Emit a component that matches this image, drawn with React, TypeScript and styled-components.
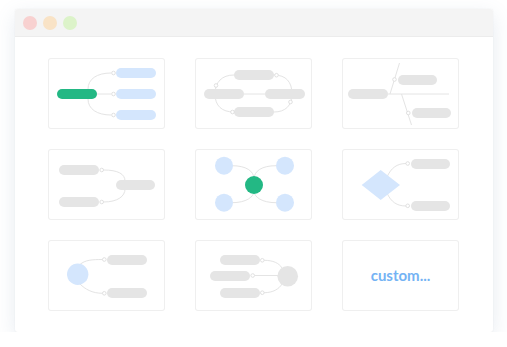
import React from "react";
import styled, { createGlobalStyle } from "styled-components";

const Global = createGlobalStyle`
  html, body { margin: 0; padding: 0; background: #ffffff; }
  body { font-family: Lato, "Open Sans", "Liberation Sans", sans-serif; }
`;

const Page = styled.div`
  padding: 9px 0 0 15px;
`;

const Window = styled.div`
  width: 478px;
  height: 323px;
  background: #ffffff;
  border-radius: 3px;
  box-shadow: 0 6px 20px rgba(100, 130, 170, 0.16), 0 0 2px rgba(0, 0, 0, 0.06);
  overflow: hidden;
`;

const TitleBar = styled.div`
  height: 28px;
  box-sizing: border-box;
  background: #f4f4f4;
  border-bottom: 1px solid #ececec;
  display: flex;
  align-items: center;
  gap: 6px;
  padding-left: 8px;
`;

const Dot = styled.span<{ $color: string }>`
  width: 14px;
  height: 14px;
  border-radius: 50%;
  background: ${(p) => p.$color};
`;

const Grid = styled.div`
  display: grid;
  grid-template-columns: repeat(3, 117px);
  grid-auto-rows: 71px;
  column-gap: 30px;
  row-gap: 20px;
  padding: 21px 0 0 33px;
`;

const Card = styled.div`
  border-radius: 3px;
  box-shadow: inset 0 0 0 1px #efefef;
  display: flex;
  align-items: center;
  justify-content: center;
`;

const Thumb = styled.svg`
  display: block;
  width: 117px;
  height: 71px;
`;

const CustomLabel = styled.span`
  font-family: Lato, "Open Sans", "Liberation Sans", sans-serif;
  font-weight: 700;
  font-size: 15px;
  line-height: 1;
  color: #74b3f4;
  margin-top: -1px;
`;

const GREY = "#e5e5e5";
const BLUE = "#d4e6fd";
const GREEN = "#23b884";
const LINE = "#e4e4e4";

const Pill = ({ x, y, w = 40, c = GREY }: { x: number; y: number; w?: number; c?: string }) => (
  <rect x={x} y={y} width={w} height={10} rx={5} fill={c} />
);

const Knot = ({ x, y }: { x: number; y: number }) => (
  <circle cx={x} cy={y} r={1.8} fill="#fff" stroke="#dcdcdc" strokeWidth={0.9} />
);

const Link = ({ d }: { d: string }) => <path d={d} fill="none" stroke={LINE} strokeWidth={1} />;

const Diagram = ({ children }: { children: React.ReactNode }) => (
  <Thumb viewBox="0 0 117 71">{children}</Thumb>
);

const diagrams: React.ReactNode[] = [
  <Diagram key="1">
    <Link d="M40 31 C40 21 49 15 63 15" />
    <Link d="M40 41 C40 51 49 57 63 57" />
    <Link d="M49 36 L63 36" />
    <Pill x={9} y={31} c={GREEN} />
    <Pill x={68} y={10} c={BLUE} />
    <Pill x={68} y={31} c={BLUE} />
    <Pill x={68} y={52} c={BLUE} />
    <Knot x={65.5} y={15} />
    <Knot x={65.5} y={36} />
    <Knot x={65.5} y={57} />
  </Diagram>,
  <Diagram key="2">
    <Link d="M39 17 L79 17 C91 17 97 24 97 36 C97 48 90 54 79 54 L39 54 C27 54 20 48 20 36 C20 24 27 17 39 17 Z" />
    <Link d="M49 36 L70 36" />
    <Pill x={39} y={12} />
    <Pill x={9} y={31} />
    <Pill x={70} y={31} />
    <Pill x={39} y={49} />
    <Knot x={81.5} y={17.2} />
    <Knot x={95.5} y={44} />
    <Knot x={37.5} y={54} />
    <Knot x={21} y={27.5} />
  </Diagram>,
  <Diagram key="3">
    <Link d="M46 36 L107 36" />
    <Link d="M57.5 5 L48 36" />
    <Link d="M59.5 36 L69.5 67" />
    <Pill x={6} y={31} />
    <Pill x={56} y={17} w={39} />
    <Pill x={70} y={50} w={39} />
    <Knot x={52.5} y={21.5} />
    <Knot x={66.3} y={55} />
  </Diagram>,
  <Diagram key="4">
    <Link d="M55.5 21 C70 21 77 25 77 32" />
    <Link d="M55.5 53 C70 53 77 47 77 40" />
    <Pill x={11} y={16} />
    <Pill x={11} y={48} />
    <Pill x={68} y={31} w={39} />
    <Knot x={53.7} y={21} />
    <Knot x={53.7} y={53} />
  </Diagram>,
  <Diagram key="5">
    <Link d="M37 16.7 C51 16.7 59 22 59 30" />
    <Link d="M81 16.7 C67 16.7 59 22 59 30" />
    <Link d="M37 53.7 C51 53.7 59 48 59 42" />
    <Link d="M81 53.7 C67 53.7 59 48 59 42" />
    <circle cx={29} cy={16.7} r={9} fill={BLUE} />
    <circle cx={90} cy={16.7} r={9} fill={BLUE} />
    <circle cx={29} cy={53.7} r={9} fill={BLUE} />
    <circle cx={90} cy={53.7} r={9} fill={BLUE} />
    <circle cx={59} cy={36} r={9} fill={GREEN} />
  </Diagram>,
  <Diagram key="6">
    <Link d="M45 28 C49 19 55 14.5 64 14.5" />
    <Link d="M45 44 C49 53 55 57 64 57" />
    <polygon points="19.7,36 38.7,21 58,36 38.7,51" fill={BLUE} />
    <Pill x={69} y={10} w={39} />
    <Pill x={69} y={52} w={39} />
    <Knot x={65.7} y={14.5} />
    <Knot x={65.7} y={56.8} />
  </Diagram>,
  <Diagram key="7">
    <Link d="M32 24.5 C37 20 44 19.5 54.5 19.5" />
    <Link d="M32 44 C37 49 44 53.3 54.5 53.3" />
    <circle cx={29.7} cy={34.3} r={10.7} fill={BLUE} />
    <Pill x={59} y={15} />
    <Pill x={59} y={48} />
    <Knot x={56.3} y={19.5} />
    <Knot x={56.3} y={53.3} />
  </Diagram>,
  <Diagram key="8">
    <Link d="M69 20.3 C78 20.3 84 23 87 28" />
    <Link d="M59.5 35.5 L83 35.5" />
    <Link d="M69 52.7 C78 52.7 84 49 87 44" />
    <Pill x={25} y={15} />
    <Pill x={15} y={31} />
    <Pill x={25} y={48} />
    <circle cx={92.7} cy={36.3} r={10.3} fill={GREY} />
    <Knot x={67.3} y={20.3} />
    <Knot x={57.7} y={35.5} />
    <Knot x={67.3} y={52.7} />
  </Diagram>,
];

export default function App() {
  return (
    <>
      <Global />
      <Page>
        <Window>
          <TitleBar>
            <Dot $color="#f8d1d0" />
            <Dot $color="#f9e3c6" />
            <Dot $color="#dcf3c9" />
          </TitleBar>
          <Grid>
            {diagrams.map((d, i) => (
              <Card key={i}>{d}</Card>
            ))}
            <Card>
              <CustomLabel>custom...</CustomLabel>
            </Card>
          </Grid>
        </Window>
      </Page>
    </>
  );
}
